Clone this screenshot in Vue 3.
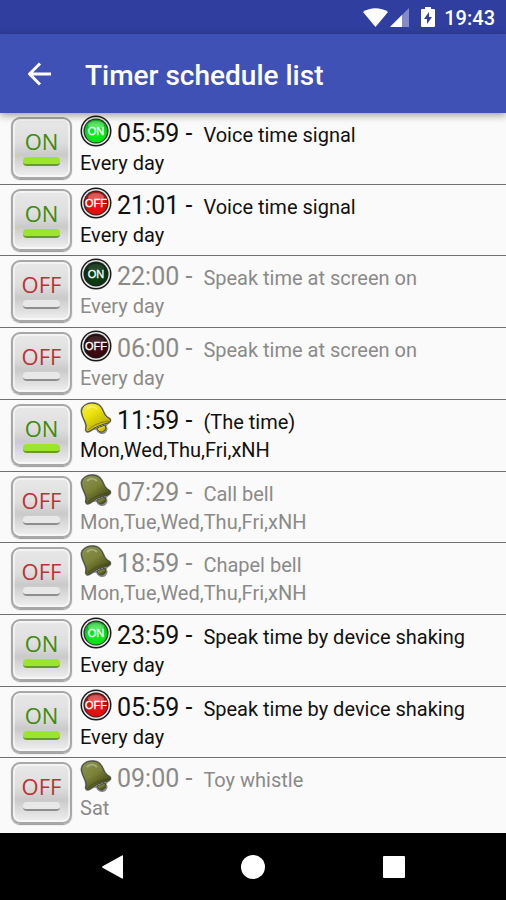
<script setup>

import { ref } from 'vue';

const schedules = ref([
    { id: 1, enabled: true, icon: 'on', time: '05:59', title: 'Voice time signal', days: 'Every day' },
    { id: 2, enabled: true, icon: 'off', time: '21:01', title: 'Voice time signal', days: 'Every day' },
    { id: 3, enabled: false, icon: 'on', time: '22:00', title: 'Speak time at screen on', days: 'Every day' },
    { id: 4, enabled: false, icon: 'off', time: '06:00', title: 'Speak time at screen on', days: 'Every day' },
    { id: 5, enabled: true, icon: 'bell', time: '11:59', title: '(The time)', days: 'Mon,Wed,Thu,Fri,xNH' },
    { id: 6, enabled: false, icon: 'bell', time: '07:29', title: 'Call bell', days: 'Mon,Tue,Wed,Thu,Fri,xNH' },
    { id: 7, enabled: false, icon: 'bell', time: '18:59', title: 'Chapel bell', days: 'Mon,Tue,Wed,Thu,Fri,xNH' },
    { id: 8, enabled: true, icon: 'on', time: '23:59', title: 'Speak time by device shaking', days: 'Every day' },
    { id: 9, enabled: true, icon: 'off', time: '05:59', title: 'Speak time by device shaking', days: 'Every day' },
    { id: 10, enabled: false, icon: 'bell', time: '09:00', title: 'Toy whistle', days: 'Sat' },
]);

function toggle(item) {
    item.enabled = !item.enabled;
}

function fillOf(item) {
    return `url(#${item.icon}-${item.enabled ? 'lit' : 'dim'})`;
}

</script>

<template>
    <div class="screen">
        <svg class="defs" width="0" height="0" aria-hidden="true">
            <defs>
                <radialGradient id="on-lit" cx="50%" cy="60%" r="55%">
                    <stop offset="0" stop-color="#0df01c" />
                    <stop offset="0.7" stop-color="#08e217" />
                    <stop offset="1" stop-color="#12a81c" />
                </radialGradient>
                <radialGradient id="off-lit" cx="50%" cy="60%" r="55%">
                    <stop offset="0" stop-color="#f01414" />
                    <stop offset="0.7" stop-color="#e00c0c" />
                    <stop offset="1" stop-color="#a81212" />
                </radialGradient>
                <radialGradient id="on-dim" cx="50%" cy="60%" r="55%">
                    <stop offset="0" stop-color="#0b4a14" />
                    <stop offset="1" stop-color="#0a2c10" />
                </radialGradient>
                <radialGradient id="off-dim" cx="50%" cy="60%" r="55%">
                    <stop offset="0" stop-color="#4a0c14" />
                    <stop offset="1" stop-color="#260a0e" />
                </radialGradient>
                <linearGradient id="bell-lit" x1="0" y1="0" x2="0.7" y2="1">
                    <stop offset="0" stop-color="#f4ee5a" />
                    <stop offset="0.4" stop-color="#ece40c" />
                    <stop offset="1" stop-color="#b0a408" />
                </linearGradient>
                <linearGradient id="bell-dim" x1="0" y1="0" x2="0.7" y2="1">
                    <stop offset="0" stop-color="#8c9454" />
                    <stop offset="0.5" stop-color="#7c8238" />
                    <stop offset="1" stop-color="#3c4010" />
                </linearGradient>
            </defs>
        </svg>

        <div class="status-bar">
            <svg class="wifi" viewBox="0 0 25 20" aria-hidden="true">
                <path d="M12.500 20L0 5C7 0 18 0 25 5z" />
            </svg>
            <svg class="signal" viewBox="0 0 19 20" aria-hidden="true">
                <path d="M19 1V20H0z" opacity="0.4" />
                <path d="M12 8V20H0z" />
            </svg>
            <svg class="battery" viewBox="0 0 14 20" aria-hidden="true">
                <path fill-rule="evenodd"
                    d="M4 0H10V2H13Q14 2 14 3V19Q14 20 13 20H1Q0 20 0 19V3Q0 2 1 2H4zM8 5L3 12H6V17L11 10H8z" />
            </svg>
            <span class="clock">19:43</span>
        </div>

        <header class="toolbar">
            <button type="button" class="back" aria-label="Back">
                <svg viewBox="0 0 24 24" aria-hidden="true">
                    <path d="M23 12H2M12 1.500L1.500 12L12 22.500" />
                </svg>
            </button>
            <h1>Timer schedule list</h1>
        </header>

        <ul class="list">
            <li v-for="item in schedules" :key="item.id" class="row" :class="{ disabled: !item.enabled }">
                <button type="button" class="toggle" :aria-pressed="item.enabled" @click="toggle(item)">
                    <span class="state">{{ item.enabled ? 'ON' : 'OFF' }}</span>
                    <span class="lamp"></span>
                </button>
                <div class="info">
                    <div class="headline">
                        <svg v-if="item.icon === 'bell'" class="icon" viewBox="0 0 32 32" aria-hidden="true">
                            <path class="bell-halo"
                                d="M17 27C18 31 23 32 25 30C27 28 27 26 25 24L28 21C30 20 31 19 30 17L27 15C23 12 24 8 20 4C16 0 7 0 3 5C1 7 1 9 2 12C3 17 7 21 6 26C5 29 7 31 10 29C12 28 14 26 17 27z" />
                            <path class="bell-edge" d="M17 26C18 30 22 31 24 29C26 28 26 26 25 23z"
                                :fill="fillOf(item)" />
                            <path class="bell-edge"
                                d="M3 5C7 0 16 0 20 4C24 8 23 12 27 15L30 17C31 19 30 20 28 21C21 23 15 25 10 29C7 31 5 29 6 26C7 21 3 17 2 12C1 9 2 7 3 5z"
                                :fill="fillOf(item)" />
                            <path class="bell-rim" d="M8 28C13 23 20 20 29 19" />
                            <path class="bell-shine" d="M7 7C10 4 14 4 17 7" />
                        </svg>
                        <svg v-else class="icon" viewBox="0 0 32 32" aria-hidden="true">
                            <circle cx="16" cy="16" r="15.500" fill="#1a1a1a" />
                            <circle cx="16" cy="16" r="14" fill="#e6e6e6" />
                            <circle cx="16" cy="16" r="12.500" fill="#222" />
                            <circle cx="16" cy="16" r="11.500" :fill="fillOf(item)" />
                            <ellipse class="gloss" cx="16" cy="10" rx="8" ry="4" />
                            <text x="16" y="20" class="badge-text">{{ item.icon === 'on' ? 'ON' : 'OFF' }}</text>
                        </svg>
                        <span class="time">{{ item.time }} -</span>
                        <span class="title">{{ item.title }}</span>
                    </div>
                    <div class="days">{{ item.days }}</div>
                </div>
            </li>
        </ul>

        <nav class="nav-bar">
            <button type="button" aria-label="Back">
                <svg viewBox="0 0 24 24" aria-hidden="true">
                    <path d="M23 1V23Q23 24 22 23.500L3 13Q1 12 3 11L22 0.500Q23 0 23 1z" />
                </svg>
            </button>
            <button type="button" aria-label="Home">
                <svg viewBox="0 0 24 24" aria-hidden="true">
                    <circle cx="12" cy="12" r="12" />
                </svg>
            </button>
            <button type="button" aria-label="Recent apps">
                <svg viewBox="0 0 24 24" aria-hidden="true">
                    <rect x="1" y="1" width="22" height="22" rx="1" />
                </svg>
            </button>
        </nav>
    </div>
</template>

<style>
body {
    background: #fafafa;
}
</style>

<style scoped>
.screen {
    display: flex;
    flex-direction: column;
    min-height: 100vh;
    background: #fafafa;
    color: #111;
    font-family: Roboto, "Liberation Sans", sans-serif;
}

.defs {
    position: absolute;
}

button {
    margin: 0;
    padding: 0;
    border: 0;
    background: none;
    cursor: pointer;
}

.status-bar {
    display: flex;
    align-items: center;
    justify-content: flex-end;
    height: 34px;
    padding-right: 11px;
    background: #303f9f;
    color: #fff;
}

.status-bar svg {
    height: 20px;
    fill: #fff;
}

.wifi {
    width: 25px;
}

.signal {
    width: 19px;
    margin-left: 2px;
}

.battery {
    width: 14px;
    margin-left: 12px;
}

.clock {
    margin-left: 9px;
    padding-top: 2px;
    font-size: 20px;
    font-weight: 500;
    line-height: 32px;
}

.toolbar {
    position: relative;
    display: flex;
    align-items: center;
    height: 79px;
    padding-left: 28px;
    background: #3f51b5;
    box-shadow: 0 2px 8px rgba(0, 0, 0, 0.4);
    color: #fff;
}

.back svg {
    display: block;
    width: 24px;
    height: 24px;
    fill: none;
    stroke: #fff;
    stroke-width: 3;
}

.toolbar h1 {
    margin: 0 0 0 33px;
    padding-top: 4px;
    font-size: 28px;
    font-weight: 500;
    line-height: 32px;
}

.list {
    display: flex;
    flex: 1;
    flex-direction: column;
    margin: 0;
    padding: 0 0 3px;
    list-style: none;
}

.row {
    display: flex;
    flex: 1;
    align-items: flex-start;
    gap: 8px;
    padding: 0 11px;
    border-bottom: 1px solid #707070;
}

.row:last-child {
    border-bottom-color: transparent;
}

.toggle {
    display: flex;
    flex: none;
    flex-direction: column;
    align-items: center;
    box-sizing: border-box;
    width: 61px;
    height: 62px;
    margin-top: 4px;
    padding-top: 10px;
    border: 2px solid #a8a8a8;
    border-radius: 9px;
    background: linear-gradient(#e8e8e8, #dedede 40%, #cacaca 62%, #f0f0f0);
    box-shadow: inset 0 0 0 2px rgba(255, 255, 255, 0.5), 0 1px 1px #999;
}

.state {
    color: #3f8a10;
    font-family: "Open Sans", "Noto Sans", sans-serif;
    font-size: 22px;
    line-height: 24px;
}

.lamp {
    box-sizing: border-box;
    width: 37px;
    height: 9px;
    margin-top: 4px;
    border-bottom: 2px solid #6a9a2c;
    border-radius: 4px;
    background: #9be52c;
}

.disabled .state {
    color: #b83436;
}

.disabled .lamp {
    border-bottom-color: #8e8e8e;
    background: #e8e8e8;
}

.info {
    min-width: 0;
}

.headline {
    display: flex;
    align-items: baseline;
    height: 36px;
}

.icon {
    align-self: flex-start;
    width: 32px;
    height: 32px;
    margin-top: 2px;
    margin-right: 5px;
    overflow: visible;
}

.badge-text {
    fill: #fff;
    stroke: #fff;
    stroke-width: 0.3px;
    font-family: "Liberation Sans", sans-serif;
    font-size: 11px;
    text-anchor: middle;
}

.gloss {
    fill: #fff;
    opacity: 0.3;
}

.disabled .gloss {
    opacity: 0.1;
}

.bell-halo {
    fill: none;
    stroke: #8a8a8a;
    stroke-width: 2;
}

.bell-edge {
    stroke: #444;
    stroke-width: 1;
}

.bell-rim {
    fill: none;
    stroke: #2c2c10;
    stroke-opacity: 0.4;
}

.bell-shine {
    fill: none;
    stroke: #fff;
    stroke-opacity: 0.3;
    stroke-width: 2;
}

.time {
    font-size: 25px;
    line-height: 42px;
}

.title {
    margin-left: 11px;
    font-size: 20px;
    white-space: nowrap;
}

.days {
    font-size: 20px;
    line-height: 28px;
}

.disabled .info {
    color: #8a8a8a;
}

.nav-bar {
    display: grid;
    grid-template-columns: repeat(3, 141px);
    align-items: center;
    justify-content: center;
    height: 67px;
    background: #000;
}

.nav-bar button {
    display: flex;
    justify-content: center;
}

.nav-bar svg {
    width: 24px;
    height: 24px;
    fill: #fff;
}
</style>
